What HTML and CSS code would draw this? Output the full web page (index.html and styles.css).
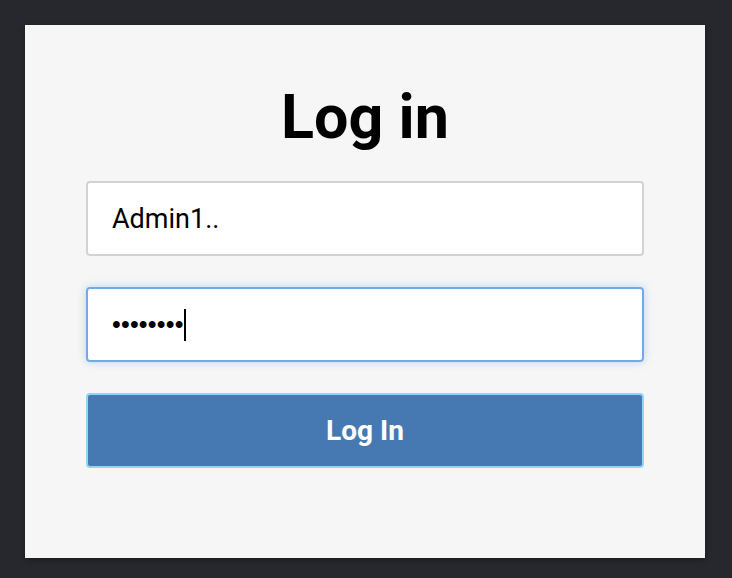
FILE: index.html
```html
<!DOCTYPE html>
<html lang="en">
<head>
    <meta charset="UTF-8">
    <title>Log in</title>
    <link rel="stylesheet" href="styles.css">
</head>
<body>
    <div class="panel">
        <h1>Log in</h1>
        <form class="login-form">
            <div class="field">Admin1..</div>
            <div class="field focused"><span class="dots">&#8226;&#8226;&#8226;&#8226;&#8226;&#8226;&#8226;&#8226;</span><span class="caret"></span></div>
            <button type="button">Log In</button>
        </form>
    </div>
</body>
</html>
```

FILE: styles.css
```css
html, body {
    margin: 0;
    height: 100%;
}
body {
    background: #26282e;
    padding: 25px 27px 20px 25px;
    box-sizing: border-box;
    font-family: Roboto, "Liberation Sans", sans-serif;
}
.panel {
    background: #f6f6f6;
    height: 533px;
    box-shadow: 0 2px 6px rgba(0,0,0,0.3);
    padding: 0 61px;
    box-sizing: border-box;
}
h1 {
    margin: 0;
    padding-top: 54px;
    font-size: 61px;
    font-weight: 700;
    line-height: 76px;
    text-align: center;
    color: #000;
}
.login-form {
    margin-top: 26px;
    display: flex;
    flex-direction: column;
    gap: 31px;
}
.field {
    height: 75px;
    box-sizing: border-box;
    background: #fff;
    border: 2px solid #d2d2d2;
    border-radius: 4px;
    padding: 0 24px;
    display: flex;
    align-items: center;
    font-size: 27px;
    color: #000;
}
.field.focused {
    border-color: #74a9e6;
    box-shadow: 0 0 8px rgba(116,169,230,0.45);
}
.dots {
    font-family: "Liberation Sans", sans-serif;
    font-size: 25px;
    letter-spacing: 0.2px;
}
.caret {
    display: inline-block;
    width: 2px;
    height: 32px;
    background: #000;
    margin-left: 0;
}
button {
    height: 75px;
    background: #4679b2;
    border: 2px solid #8fd6f6;
    border-radius: 4px;
    color: #fff;
    font-family: Roboto, "Liberation Sans", sans-serif;
    font-size: 28px;
    font-weight: 700;
    cursor: pointer;
}
```
